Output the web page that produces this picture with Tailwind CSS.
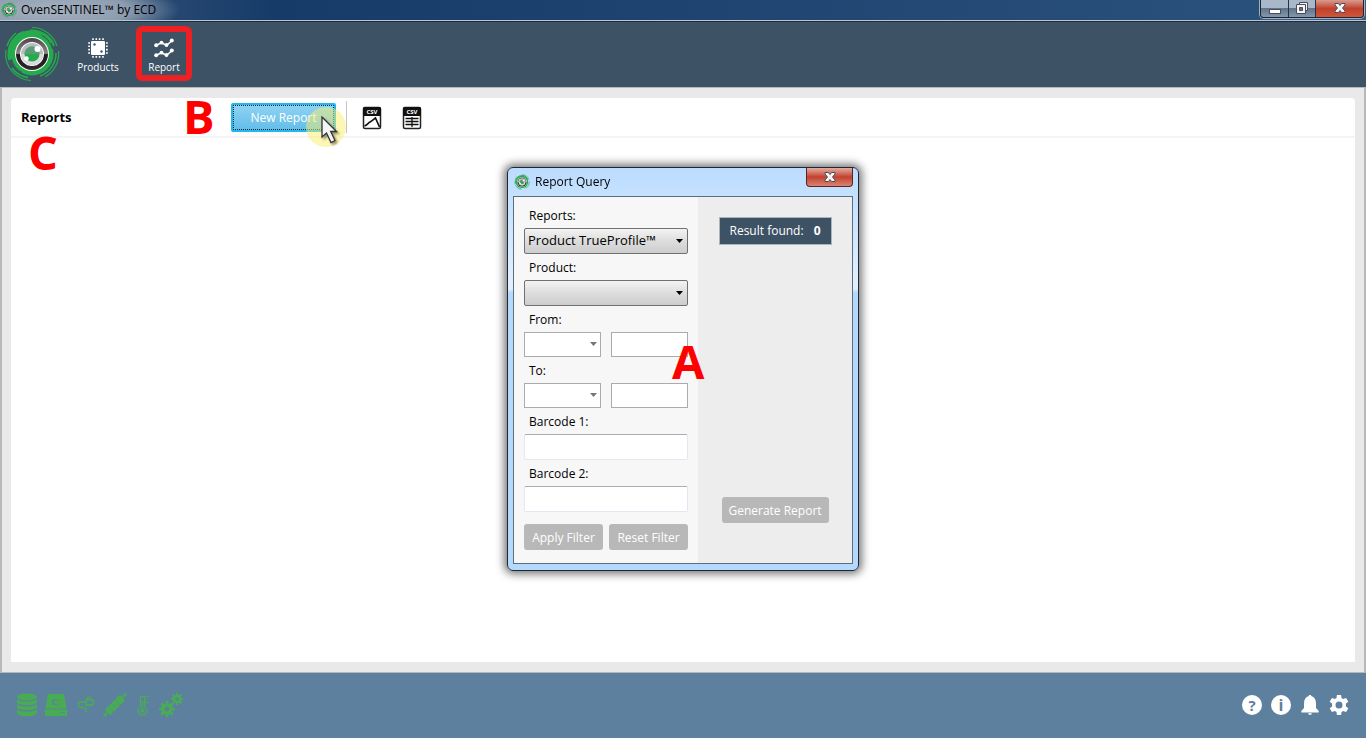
<!DOCTYPE html>
<html lang="en">
<head>
  <meta charset="UTF-8">
  <meta name="viewport" content="width=device-width, initial-scale=1.0">
  <title>OvenSENTINEL™ by ECD</title>
  <script src="https://cdn.jsdelivr.net/npm/@tailwindcss/browser@4"></script>
</head>
<body class="min-h-screen flex flex-col bg-[#e9e9e9] text-black text-[12px] font-['Open_Sans','Noto_Sans',sans-serif]">

  <!-- Shared shapes -->
  <svg class="absolute size-0">
    <defs>
      <linearGradient id="metal" x1="0" y1="0" x2="0" y2="1">
        <stop offset="0" stop-color="#4a4446"/>
        <stop offset=".48" stop-color="#8d8789"/>
        <stop offset=".52" stop-color="#1c191a"/>
        <stop offset="1" stop-color="#2e2a2b"/>
      </linearGradient>
    </defs>
    <symbol id="logo" viewBox="0 0 56 56">
      <circle cx="28" cy="28" r="21.500" fill="#25ab4b"/>
      <g fill="none" stroke="#25ab4b">
        <path d="M28 1.500A26.500 26.500 0 0 1 53 20" stroke-width="1.200"/>
        <path d="M54.500 25A26.500 26.500 0 0 1 41 51" stroke-width="1.200"/>
        <path d="M26 4.500A23.500 23.500 0 0 1 50 20" stroke-width="2"/>
        <path d="M52 27A24 24 0 0 1 36 50" stroke-width="1.500"/>
        <path d="M20 7A22.500 22.500 0 0 1 47 17" stroke-width="3"/>
        <path d="M2 24A26.500 26.500 0 0 0 27 54.500" stroke-width="1.200"/>
        <path d="M8 42A24 24 0 0 0 24 51.500" stroke-width="2"/>
        <path d="M20 6.500A23 23 0 0 0 6 34" stroke-width="3.500"/>
        <path d="M3 20A26 26 0 0 1 12 7" stroke-width="1.500"/>
      </g>
      <path d="M38 9.500A21 21 0 0 1 48.500 23M18 46.500A21 21 0 0 1 7.500 33" fill="none" stroke="#3d5165"/>
      <circle cx="28" cy="28" r="17" fill="#fff"/>
      <circle cx="28" cy="28" r="16" fill="url(#metal)"/>
      <circle cx="28" cy="28" r="12" fill="#fff"/>
      <circle cx="28" cy="28" r="11" fill="#b9bcbf"/>
      <path d="M17 28A11 11 0 0 0 39 28Z" fill="#d9dbdc"/>
      <circle cx="28" cy="28" r="7.500" fill="#25ab4b"/>
      <path d="M20.500 28A7.500 7.500 0 0 1 35.500 28Z" fill="#5b9c78"/>
      <circle cx="33.500" cy="23" r="3" fill="#fff"/>
      <circle cx="22.500" cy="32.500" r="2.200" fill="#fff"/>
    </symbol>
    <symbol id="close" viewBox="0 0 12 10">
      <path d="M1 .5H4.500L6 2.500 7.500 .5H11V2L8.500 5 11 8V9.500H7.500L6 7.500 4.500 9.500H1V8L3.500 5 1 2Z" fill="#f4f4f4" stroke="#4b4d5c"/>
    </symbol>
    <symbol id="gear" viewBox="0 0 24 24">
      <path fill-rule="evenodd" d="M9.500 0h5l.5 3.700 2 1.200 3.500-1.400 2.700 4.600-2.900 2.200v3.400l2.900 2.200-2.700 4.600-3.500-1.400-2 1.200-.5 3.700h-5L9 20.300l-2-1.200-3.500 1.400L.8 15.900l2.900-2.200v-3.400L.8 8.100l2.700-4.600L7 4.900l2-1.200ZM12 7.800a4.200 4.200 0 1 0 0 8.400 4.200 4.200 0 0 0 0-8.400Z"/>
    </symbol>
    <symbol id="cog" viewBox="0 0 24 24">
      <circle cx="12" cy="12" r="6.200" fill="none" stroke="currentColor" stroke-width="5"/>
      <g stroke="currentColor" stroke-width="4">
        <path d="M12 0V5M12 19V24M0 12H5M19 12H24M3.500 3.500 7 7M17 17l3.500 3.500M20.500 3.500 17 7M7 17l-3.500 3.500"/>
      </g>
    </symbol>
  </svg>

  <!-- Title bar -->
  <header class="h-[22px] flex items-start justify-between border-b border-[#1b2b40] bg-linear-to-r from-[#3d5c80] via-[#173b68] via-20% to-[#2c527e]">
    <div class="h-[21px] w-full flex items-center gap-1 pl-px border-b border-[#b9c7d5] bg-[radial-gradient(ellipse_130px_30px_at_50px_10px,#a5b1bf_0%,#8d9db0_60%,transparent_100%)]">
      <svg class="size-4"><use href="#logo"/></svg>
      <h1 class="text-[12px] leading-5">OvenSENTINEL™ by ECD</h1>
    </div>
    <div class="h-[21px] pr-0.5 border-b border-[#b9c7d5] bg-[#3a5b82]">
      <div class="flex h-[18px] overflow-hidden rounded-b border border-t-0 border-[#182638] divide-x divide-[#243448] shadow-[0_0_0_1px_#9fb0c2]">
        <button aria-label="Minimize" class="w-7 flex justify-center items-center bg-linear-to-b from-[#a9b8c8] from-50% via-[#60748b] via-50% to-[#8698ab]">
          <svg class="w-3 h-3" viewBox="0 0 12 12"><rect x=".5" y="6.500" width="11" height="4" fill="#fff" stroke="#4b4d5c"/></svg>
        </button>
        <button aria-label="Restore" class="w-[27px] flex justify-center items-center pb-0.5 bg-linear-to-b from-[#a9b8c8] from-50% via-[#60748b] via-50% to-[#8698ab]">
          <svg class="w-3 h-3" viewBox="0 0 12 12" fill="#f4f4f4" stroke="#4b4d5c"><path d="M3.500 .5H11.500V8.500H3.500Z"/><path d="M.5 2.500H9.500V11.500H.5Z"/><path d="M3.500 5.500H6.500V8.500H3.500Z" fill="#60748b"/></svg>
        </button>
        <button aria-label="Close" class="w-[47px] flex justify-center items-center pb-0.5 bg-linear-to-b from-[#d69a8e] from-0% via-[#c0402a] via-50% to-[#d0563b]">
          <svg class="w-3 h-2.5"><use href="#close"/></svg>
        </button>
      </div>
    </div>
  </header>

  <!-- Toolbar -->
  <nav class="h-[65px] flex items-center pl-1 pb-0.5 bg-[#3d5265] text-white">
    <svg class="size-14"><use href="#logo"/></svg>
    <div class="flex gap-2.5 pl-2.5">
      <button class="w-14 h-[55px] flex flex-col items-center justify-center pt-1.5 text-[10px] leading-4">
        <svg class="size-5 mb-px" viewBox="0 0 20 20">
          <rect x="3" y="3" width="14" height="14" rx="1" fill="#fff"/>
          <path d="M5 .2V2M8.300 .2V2M11.600 .2V2M15 .2V2M5 18v1.800M8.300 18v1.800M11.600 18v1.800M15 18v1.800M.2 5H2M.2 8.300H2M.2 11.600H2M.2 15H2M18 5h1.800M18 8.300h1.800M18 11.600h1.800M18 15h1.800" stroke="#fff" stroke-width="1.600"/>
          <circle cx="6.500" cy="6.500" r="1.200" fill="#3d5265"/><circle cx="13.500" cy="13.500" r="1.200" fill="#3d5265"/>
        </svg>
        Products
      </button>
      <button class="w-14 h-[55px] flex flex-col items-center justify-center pt-1.5 text-[10px] leading-4 rounded-md border-[6px] border-[#ed2024]">
        <svg class="size-5 mb-px shrink-0" viewBox="0 0 20 20" fill="#fff" stroke="#fff">
          <g id="trend"><path d="M2 7.500 7.500 4.500 12.500 7.500 18 2.500" fill="none" stroke-width="1.500"/>
          <g stroke="none"><circle cx="2.200" cy="7.300" r="2"/><circle cx="7.500" cy="4.700" r="1.900"/><circle cx="12.500" cy="7" r="1.900"/><circle cx="17.800" cy="2.500" r="2"/></g></g>
          <use href="#trend" y="10"/>
        </svg>
        Report
      </button>
    </div>
  </nav>

  <!-- Content -->
  <main class="relative flex-1 flex flex-col px-[9px] py-2.5 border-t border-x-2 border-b border-[#b8b8b8]">
    <section class="flex-1 rounded-t bg-white">
      <div class="h-10 flex items-center border-b-2 border-[#f5f5f5]">
        <h2 class="w-[220px] pl-2.5 pt-0.5 text-[13px] font-bold">Reports</h2>
        <div class="relative">
          <button class="w-[105px] h-[29px] pt-0.5 rounded-xs border-2 border-[#1cb8f2] bg-linear-to-b from-[#8ed3f3] to-[#62bde9] text-[12px] text-white outline-1 outline-dotted outline-[#123] -outline-offset-3">New Report</button>
          <div class="absolute left-[75px] top-1 size-10 rounded-full bg-[#fbf06e]/50"></div>
          <svg class="absolute left-[90px] top-[13px] w-6 h-8 drop-shadow-[2px_2px_1px_#0006]" viewBox="0 0 24 32">
            <path d="M1 1V21L5.500 17 10 26.500 14 24.500 9.700 15.500H15.500Z" fill="#f4f4f4" stroke="#333" stroke-width="1.300"/>
          </svg>
        </div>
        <div class="ml-2.5 h-8 w-px bg-[#c4c4c4]"></div>
        <div class="flex gap-5 pl-[15px] pt-0.5">
          <button aria-label="Export chart to CSV">
            <svg class="block w-5 h-6" viewBox="0 0 20 24">
              <rect x="1.500" y="1.500" width="17" height="21" rx="1.500" fill="#fff" stroke="#222" stroke-width="1.500"/>
              <rect x="1" y="1" width="18" height="9" rx="1.500" fill="#111"/>
              <text x="10" y="8" fill="#fff" font-size="6" font-weight="bold" text-anchor="middle">CSV</text>
              <path d="M2.500 20C5 19 6 17 8 16S11 14 13.500 12L17.500 21" fill="none" stroke="#111" stroke-width="1.700"/>
            </svg>
          </button>
          <button aria-label="Export table to CSV">
            <svg class="block w-5 h-6" viewBox="0 0 20 24">
              <rect x="1.500" y="1.500" width="17" height="21" rx="1.500" fill="#fff" stroke="#222" stroke-width="1.500"/>
              <rect x="1" y="1" width="18" height="9" rx="1.500" fill="#111"/>
              <text x="10" y="8" fill="#fff" font-size="6" font-weight="bold" text-anchor="middle">CSV</text>
              <path d="M3.500 12.500H16.500M3.500 15.500H16.500M3.500 18.500H16.500M10 11V21" fill="none" stroke="#111" stroke-width="1.300"/>
            </svg>
          </button>
        </div>
      </div>
    </section>

    <!-- Callout letters -->
    <span class="absolute left-[181px] top-2 text-[47px] leading-10 font-bold text-[#f00]">B</span>
    <span class="absolute left-[26px] top-11 text-[47px] leading-10 font-bold text-[#f00]">C</span>
  </main>

  <!-- Status bar -->
  <footer class="h-[65px] flex items-center justify-between pl-4 pr-[17px] pb-px bg-[#5e809f]">
    <div class="flex items-center text-[#48ad52]">
      <svg class="w-[22px] h-6" viewBox="0 0 22 24" fill="currentColor">
        <ellipse cx="11" cy="4" rx="10" ry="3.500"/>
        <path d="M1 6C3 9.500 19 9.500 21 6V9.500C19 13 3 13 1 9.500ZM1 11C3 14.500 19 14.500 21 11V14.500C19 18 3 18 1 14.500ZM1 16C3 19.500 19 19.500 21 16V20C19 24.500 3 24.500 1 20Z"/>
      </svg>
      <svg class="ml-[7px] w-[22px] h-6" viewBox="0 0 22 24">
        <path d="M3 1H19L21.500 15.500H.5ZM0 16.500H22V23H0Z" fill="currentColor"/>
        <text x="11" y="12" fill="#5e809f" font-size="9" font-weight="bold" text-anchor="middle">C:</text>
        <path d="M16 19.500H20" stroke="#5e809f"/>
      </svg>
      <svg class="ml-2.5 w-[18px] h-6" viewBox="0 0 18 24" fill="none" stroke="currentColor" stroke-width="1.300">
        <path d="M9 9H4A2.700 2.700 0 0 0 4 14.500H7Q9 14.500 9 17V20M9 7H16V12H9ZM10 6V4.500H13.500V6M16 8.500H17.500"/>
      </svg>
      <svg class="ml-2 w-6 h-6" viewBox="0 0 24 24">
        <path d="M1 23 23 1" stroke="currentColor" stroke-width="1.500"/>
        <path d="M4.500 19.500 19.500 4.500" stroke="currentColor" stroke-width="7.500"/>
        <path d="M5 13.500 10.500 19M8.500 10 14 15.500M12 6.500 17.500 12" stroke="#5e809f" stroke-width=".8"/>
        <circle cx="2" cy="22" r="1.700" fill="currentColor"/><circle cx="22" cy="2" r="1.700" fill="currentColor"/>
      </svg>
      <svg class="ml-2.5 w-3 h-6" viewBox="0 0 12 24" fill="none" stroke="currentColor">
        <path d="M3.500 13.500V3.500H7.500V13.500A4.500 4.500 0 1 1 3.500 13.500Z" stroke-width="1.300"/>
        <path d="M5.500 8V16M8.500 3.500H11.500M8.500 6.500H10.500M8.500 9.500H11.500"/>
        <circle cx="5.500" cy="17.500" r="1.700" fill="currentColor"/>
      </svg>
      <svg class="ml-2.5 w-6 h-6" viewBox="0 0 24 24">
        <use href="#cog" x="0" y="8" width="16" height="16"/>
        <use href="#cog" x="12" y="0" width="12" height="12"/>
      </svg>
    </div>
    <div class="flex gap-[9px]">
      <button aria-label="Help" class="size-5 rounded-full bg-white text-[#5e809f] text-[15px] leading-5 font-bold">?</button>
      <button aria-label="Information" class="size-5 rounded-full bg-white text-[#5e809f] text-[16px] leading-5 font-bold">i</button>
      <button aria-label="Notifications">
        <svg class="block size-5" viewBox="0 0 20 20" fill="#fff">
          <path d="M8.800 1A1.200 1.200 0 0 1 11.200 1C14.500 2 16 4.500 16 8.500V13L18.700 16V17.500H1.300V16L4 13V8.500C4 4.500 5.500 2 8.800 1ZM8 18.300H12Q11.500 20 10 20T8 18.300Z"/>
        </svg>
      </button>
      <button aria-label="Settings">
        <svg class="block size-5 fill-white"><use href="#gear"/></svg>
      </button>
    </div>
  </footer>

  <!-- Report Query dialog -->
  <div role="dialog" aria-labelledby="dialogTitle" class="fixed left-1/2 top-1/2 -translate-1/2 w-[352px] rounded-md border border-[#1c2836] bg-linear-to-b from-[#bcdcff] from-0% via-[#e3f0fd] via-30% to-[#b5d9fd] to-31% px-[5px] pb-1.5 shadow-[0_0_8px_3px_#0008]">
    <div class="h-7 flex items-start justify-between">
      <div class="flex items-center gap-[5px] pt-1.5 pl-px">
        <svg class="size-4"><use href="#logo"/></svg>
        <h2 id="dialogTitle" class="text-[12px] leading-4">Report Query</h2>
      </div>
      <button aria-label="Close dialog" class="w-[47px] h-[19px] flex items-center justify-center rounded-b border border-t-0 border-[#5a2520] bg-linear-to-b from-[#e2aba2] from-0% via-[#c2402e] via-50% to-[#d98373]">
        <svg class="w-3 h-2.5"><use href="#close"/></svg>
      </button>
    </div>

    <form class="relative flex border border-[#5d6d7d] bg-[#ededed]">
      <div class="w-[184px] px-2.5 pt-[7px] pb-[13px] flex flex-col gap-0.5 bg-[#f7f7f7]">
        <div>
          <label for="report" class="block pl-[5px] leading-6">Reports:</label>
          <div class="relative">
            <select id="report" class="block w-full h-[26px] pl-[3px] appearance-none rounded-xs border border-[#707070] bg-linear-to-b from-[#f3f3f3] from-0% via-[#dddddd] via-50% to-[#cdcdcd] text-[13px]">
              <option>Product TrueProfile™</option>
            </select>
            <svg class="absolute right-[5px] top-[11px] w-[7px] h-1 pointer-events-none" viewBox="0 0 7 4"><path d="M0 0H7L3.500 4Z"/></svg>
          </div>
        </div>
        <div>
          <label for="product" class="block pl-[5px] leading-6">Product:</label>
          <div class="relative">
            <select id="product" class="block w-full h-[26px] pl-[3px] appearance-none rounded-xs border border-[#707070] bg-linear-to-b from-[#f3f3f3] from-0% via-[#dddddd] via-50% to-[#cdcdcd] text-[13px]">
              <option></option>
            </select>
            <svg class="absolute right-[5px] top-[11px] w-[7px] h-1 pointer-events-none" viewBox="0 0 7 4"><path d="M0 0H7L3.500 4Z"/></svg>
          </div>
        </div>
        <div>
          <label for="fromDate" class="block pl-[5px] leading-6">From:</label>
          <div class="grid grid-cols-2 gap-2.5">
            <div class="relative">
              <select id="fromDate" class="block w-full h-[25px] appearance-none border border-[#ababab] bg-white"><option></option></select>
              <svg class="absolute right-1 top-2.5 w-[7px] h-1 pointer-events-none fill-[#777]" viewBox="0 0 7 4"><path d="M0 0H7L3.500 4Z"/></svg>
            </div>
            <input type="text" aria-label="From time" class="w-full h-[25px] border border-[#ababab] bg-white px-1">
          </div>
        </div>
        <div>
          <label for="toDate" class="block pl-[5px] leading-6">To:</label>
          <div class="grid grid-cols-2 gap-2.5">
            <div class="relative">
              <select id="toDate" class="block w-full h-[25px] appearance-none border border-[#ababab] bg-white"><option></option></select>
              <svg class="absolute right-1 top-2.5 w-[7px] h-1 pointer-events-none fill-[#777]" viewBox="0 0 7 4"><path d="M0 0H7L3.500 4Z"/></svg>
            </div>
            <input type="text" aria-label="To time" class="w-full h-[25px] border border-[#ababab] bg-white px-1">
          </div>
        </div>
        <div>
          <label for="barcode1" class="block pl-[5px] leading-6">Barcode 1:</label>
          <input id="barcode1" type="text" class="block w-full h-[26px] rounded-xs border border-[#e2e7f0] border-t-[#abadb3] bg-white px-1">
        </div>
        <div>
          <label for="barcode2" class="block pl-[5px] leading-6">Barcode 2:</label>
          <input id="barcode2" type="text" class="block w-full h-[26px] rounded-xs border border-[#e2e7f0] border-t-[#abadb3] bg-white px-1">
        </div>
        <div class="grid grid-cols-2 gap-1.5 pt-2.5">
          <button type="button" class="h-[26px] pt-0.5 rounded-[3px] bg-[#b8b8b8] text-white whitespace-nowrap">Apply Filter</button>
          <button type="button" class="h-[26px] pt-0.5 rounded-[3px] bg-[#b8b8b8] text-white whitespace-nowrap">Reset Filter</button>
        </div>
      </div>
      <div class="flex-1 flex flex-col items-center justify-between pt-5 pb-10">
        <p class="w-[113px] h-7 flex items-center justify-between px-2.5 border border-[#a9b4bd] bg-[#3d5265] text-white"><span>Result found:</span><b>0</b></p>
        <button type="button" class="w-[107px] h-[26px] pt-0.5 rounded-[3px] bg-[#b8b8b8] text-white">Generate Report</button>
      </div>
      <span class="absolute left-[158px] top-36 text-[47px] leading-10 font-bold text-[#f00]">A</span>
    </form>
  </div>

</body>
</html>
